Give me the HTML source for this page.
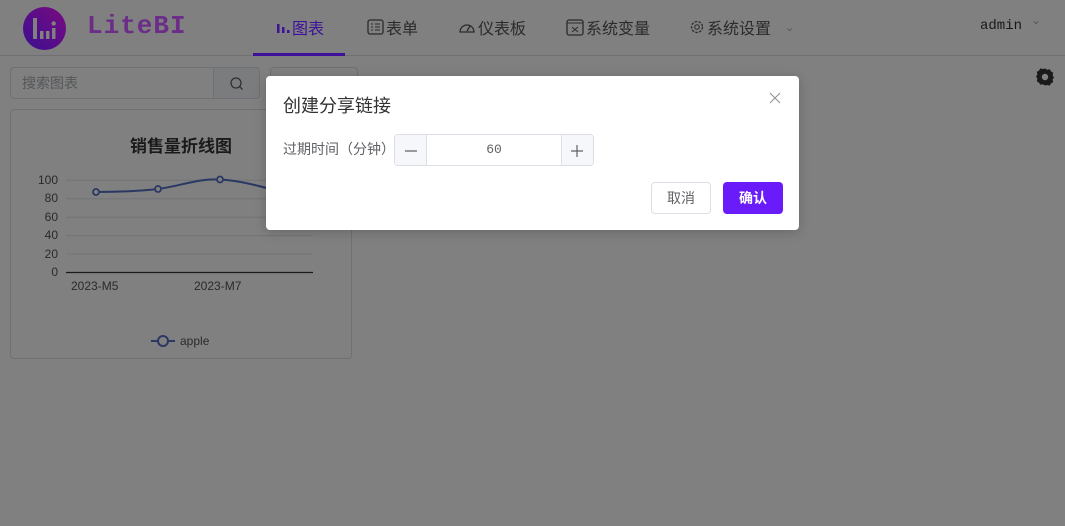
<!DOCTYPE html>
<html><head><meta charset="utf-8">
<style>
*{margin:0;padding:0;box-sizing:border-box}
body{width:1065px;height:526px;overflow:hidden;background:#808080;font-family:"Liberation Sans","Noto Sans CJK SC",sans-serif;position:relative;color:#18191a}
.abs{position:absolute}
.hdr{left:0;top:0;width:1065px;height:56px;border-bottom:1px solid #6e7073}
.nav{top:15px;font-size:16px;color:#2a2b2d;display:flex;align-items:center;gap:2px;white-space:nowrap}
.modal{left:266px;top:76px;width:533px;height:154px;background:#fff;border-radius:4px;box-shadow:0 2px 12px rgba(0,0,0,.2)}
</style></head><body>
<div class="abs hdr"></div>
<svg class="abs" style="left:23px;top:7px" width="43" height="43" viewBox="0 0 43 43">
<defs><linearGradient id="g" x1="1" y1="0" x2="0" y2="1"><stop offset="0" stop-color="#7a0a80"/><stop offset="1" stop-color="#3a1090"/></linearGradient></defs>
<circle cx="21.5" cy="21.5" r="21.5" fill="url(#g)"/>
<rect x="10" y="11" width="4" height="21" fill="#808080"/><rect x="17" y="24" width="3.5" height="8" fill="#808080"/><rect x="23" y="24" width="3.5" height="8" fill="#808080"/><rect x="29" y="21" width="3.5" height="11" fill="#808080"/><circle cx="30.7" cy="16.5" r="2.2" fill="#808080"/>
</svg>
<div class="abs" style="left:87px;top:11px;font-family:'Liberation Mono',monospace;font-weight:bold;font-size:26px;color:#6b2d88;letter-spacing:1px">LiteBI</div>
<div class="abs nav" style="left:276px;color:#3d119a"><svg width="14" height="14"><rect x="1" y="4" width="2.5" height="9" fill="#3d119a"/><rect x="6" y="7" width="2.5" height="6" fill="#3d119a"/><rect x="11" y="10" width="2.5" height="3" fill="#3d119a"/></svg>图表</div>
<div class="abs" style="left:253px;top:53px;width:92px;height:3px;background:#3d119a"></div>
<div class="abs nav" style="left:367px"><svg width="17" height="16"><rect x="1" y="1" width="15" height="14" rx="2" fill="none" stroke="#2a2b2d" stroke-width="1.3"/><path d="M4 5h2M8 5h5M4 8h2M8 8h5M4 11h2M8 11h5" stroke="#2a2b2d"/></svg>表单</div>
<div class="abs nav" style="left:458px"><svg width="18" height="16"><path d="M2 13A7 7 0 1 1 16 13Z" fill="none" stroke="#2a2b2d" stroke-width="1.3"/><path d="M9 12l3-5" stroke="#2a2b2d" stroke-width="1.3"/></svg>仪表板</div>
<div class="abs nav" style="left:566px"><svg width="18" height="17"><rect x="1" y="1" width="16" height="15" rx="2" fill="none" stroke="#2a2b2d" stroke-width="1.3"/><path d="M1 4h16" stroke="#2a2b2d"/><path d="M6 8l6 5M12 8l-6 5" stroke="#2a2b2d"/></svg>系统变量</div>
<div class="abs nav" style="left:689px"><svg width="16" height="16"><circle cx="8" cy="8" r="5.5" fill="none" stroke="#2a2b2d" stroke-width="1.3" stroke-dasharray="2.5 1.4"/><circle cx="8" cy="8" r="2.3" fill="none" stroke="#2a2b2d"/></svg>系统设置<span style="font-size:11px;color:#555;margin-left:12px">&#8964;</span></div>
<div class="abs" style="left:980px;top:18px;font-family:'Liberation Mono',monospace;font-size:14px;color:#18191a">admin</div>
<div class="abs" style="left:1031px;top:13px;font-size:12px;color:#555">&#8964;</div>
<div class="abs" style="left:10px;top:67px;width:250px;height:32px;border:1px solid #6e7073;border-radius:4px"></div>
<div class="abs" style="left:213px;top:67px;width:47px;height:32px;border:1px solid #6e7073;background:#7b7c7d;border-radius:0 4px 4px 0"></div>
<svg class="abs" style="left:229px;top:76px" width="15" height="15"><circle cx="7" cy="7" r="5" fill="none" stroke="#303133" stroke-width="1.3"/><path d="M10.5 10.5l3 3" stroke="#303133" stroke-width="1.3"/></svg>
<div class="abs" style="left:22px;top:73px;font-size:14px;color:#545659">搜索图表</div>
<div class="abs" style="left:270px;top:67px;width:88px;height:32px;border:1px solid #6e7073;border-radius:4px"></div>
<svg class="abs" style="left:1035px;top:67px" width="20" height="20" viewBox="0 0 20 20"><path d="M10 1.5l2.2 1.3 2.5-.6 1.3 2.2 2.2 1.3-.6 2.5 1.3 2.2-1.3 2.2.6 2.5-2.2 1.3-1.3 2.2-2.5-.6L10 18.5l-2.2-1.3-2.5.6L4 15.6 1.8 14.3l.6-2.5L1.1 9.6l1.3-2.2-.6-2.5L4 3.6l1.3-2.2 2.5.6z" fill="#1a1a1a"/><circle cx="10" cy="10" r="3.2" fill="#808080"/></svg>
<div class="abs" style="left:10px;top:109px;width:342px;height:250px;border:1px solid #6e7073;border-radius:4px"></div>
<div class="abs" style="left:10px;top:132px;width:342px;text-align:center;font-size:17px;font-weight:bold;color:#1a1a1a">销售量折线图</div>
<svg class="abs" style="left:10px;top:160px" width="342" height="200">
<g stroke="#707379"><path d="M56 20.3H303M56 38.7H303M56 57.2H303M56 75.6H303M56 94H303"/></g>
<path d="M56 112.5H303" stroke="#1a1a1a" stroke-width="1.2"/>
<g font-size="12" fill="#2a2a2a" text-anchor="end" font-family="Liberation Sans,sans-serif"><text x="48" y="24">100</text><text x="48" y="42">80</text><text x="48" y="61">60</text><text x="48" y="79">40</text><text x="48" y="98">20</text><text x="48" y="116">0</text></g>
<g font-size="12" fill="#2a2a2a" font-family="Liberation Sans,sans-serif"><text x="61" y="130">2023-M5</text><text x="184" y="130">2023-M7</text></g>
<path d="M86 32C110 32 130 31 148 29C170 26 190 18 210 19.5C235 21 255 28 272 32" fill="none" stroke="#2a3863" stroke-width="2"/>
<g fill="#808080" stroke="#2a3863" stroke-width="1.8"><circle cx="86" cy="32" r="3"/><circle cx="148" cy="29" r="3"/><circle cx="210" cy="19.5" r="3"/></g>
<path d="M141 181H165" stroke="#2a3863" stroke-width="2"/><circle cx="153" cy="181" r="5" fill="#808080" stroke="#2a3863" stroke-width="2"/>
<text x="170" y="185" font-size="12" fill="#2a2a2a" font-family="Liberation Sans,sans-serif">apple</text>
</svg>
<div class="abs modal">
<div class="abs" style="left:17px;top:16px;font-size:18px;color:#303133">创建分享链接</div>
<svg class="abs" style="left:503px;top:16px" width="12" height="12"><path d="M1 1l10 10M11 1L1 11" stroke="#909399" stroke-width="1.1"/></svg>
<div class="abs" style="left:17px;top:63px;font-size:14px;color:#606266">过期时间（分钟）</div>
<div class="abs" style="left:128px;top:58px;width:200px;height:32px;border:1px solid #dcdfe6;border-radius:4px;overflow:hidden">
<div class="abs" style="left:0;top:0;width:32px;height:30px;background:#f5f7fa;border-right:1px solid #dcdfe6"></div>
<div class="abs" style="right:0;top:0;width:32px;height:30px;background:#f5f7fa;border-left:1px solid #dcdfe6"></div>
<svg class="abs" style="left:9px;top:9px" width="14" height="14"><path d="M1 7h12" stroke="#606266" stroke-width="1.2"/></svg>
<svg class="abs" style="right:9px;top:9px" width="14" height="14"><path d="M1 7h12M7 1v12" stroke="#606266" stroke-width="1.2"/></svg>
<div class="abs" style="left:32px;width:134px;top:7px;text-align:center;font-family:'Liberation Mono',monospace;font-size:13px;color:#606266">60</div>
</div>
<div class="abs" style="left:385px;top:106px;width:60px;height:32px;border:1px solid #dcdfe6;border-radius:4px;font-size:14px;color:#606266;text-align:center;line-height:30px">取消</div>
<div class="abs" style="left:457px;top:106px;width:60px;height:32px;background:#6a1bfa;border-radius:4px;font-size:14px;font-weight:bold;color:#fff;text-align:center;line-height:32px">确认</div>
</div>
</body></html>
